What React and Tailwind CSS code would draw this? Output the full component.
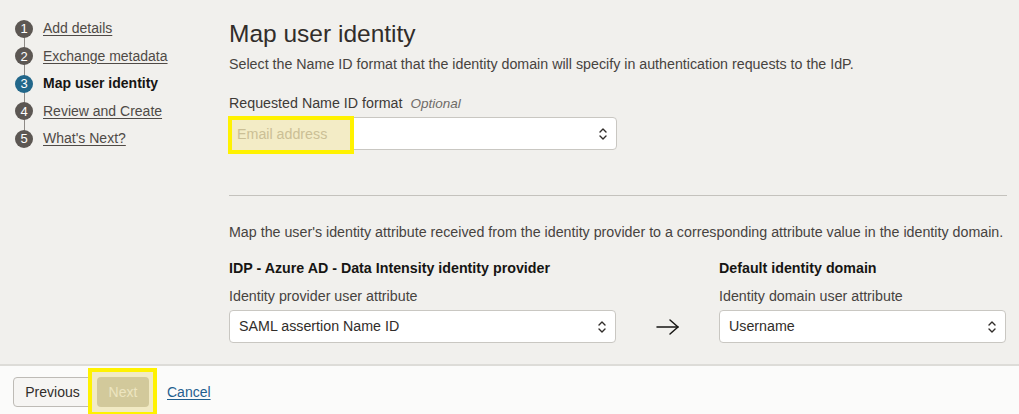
import React from 'react';

const steps = [
    { n: 1, label: 'Add details' },
    { n: 2, label: 'Exchange metadata' },
    { n: 3, label: 'Map user identity', active: true },
    { n: 4, label: 'Review and Create' },
    { n: 5, label: "What's Next?" },
];

function Chevrons() {
    return (
        <svg width="10" height="16" viewBox="0 0 10 16" fill="none" stroke="#312d2a" strokeWidth="1.4" strokeLinecap="round" strokeLinejoin="round">
            <path d="M2 6 L5 3 L8 6" />
            <path d="M2 10 L5 13 L8 10" />
        </svg>
    );
}

function SelectBox({ value, className = '' }) {
    return (
        <div className={`flex items-center justify-between h-[33px] bg-white border border-[#c9c7c2] rounded-[4px] pl-[9px] pr-[8px] ${className}`}>
            <span className="text-[14.25px] text-[#312d2a]">{value}</span>
            <Chevrons />
        </div>
    );
}

export default function App() {
    return (
        <div className="w-full h-[414px] flex flex-col bg-[#f1f0ed] overflow-hidden" style={{ fontFamily: '"Liberation Sans", Arial, sans-serif' }}>
            <div className="flex-1 flex min-h-0">
                {/* ── Steps ── */}
                <div className="w-[229px] shrink-0 pt-[15px] pl-[15px]">
                    <div className="relative">
                        <div className="absolute left-[8.5px] top-[14px] bottom-[14px] w-px bg-[#8e8a86]" />
                        {steps.map((s) => (
                            <div key={s.n} className="relative flex items-center h-[27.5px]">
                                <span className={`w-[18px] h-[18px] rounded-full flex items-center justify-center text-white text-[13px] leading-none ${s.active ? 'bg-[#22678a]' : 'bg-[#5c5753]'}`}>
                                    {s.n}
                                </span>
                                {s.active ? (
                                    <span className="ml-[10px] text-[14px] font-bold text-[#161513]">{s.label}</span>
                                ) : (
                                    <a className="ml-[10px] text-[14px] text-[#4f4a46] underline underline-offset-2">{s.label}</a>
                                )}
                            </div>
                        ))}
                    </div>
                </div>

                {/* ── Main ── */}
                <div className="flex-1 pr-[12px]">
                    <h1 className="pt-[20px] text-[24.5px] leading-[28px] text-[#312d2a]">Map user identity</h1>
                    <p className="mt-[6px] text-[14.25px] leading-[20px] text-[#47433f]">
                        Select the Name ID format that the identity domain will specify in authentication requests to the IdP.
                    </p>
                    <div className="mt-[19px] text-[14.25px] leading-[20px] text-[#3e3a37]">
                        Requested Name ID format <i className="ml-[4px] text-[13.5px] text-[#6f6b67]">Optional</i>
                    </div>
                    <div className="relative mt-[3px] w-[388px]">
                        <SelectBox value="" />
                        <div className="absolute -left-[1px] -top-[1px] w-[126px] h-[38px] border-4 border-[#fff200] bg-[#f3ecc6] flex items-center pl-[5px]">
                            <span className="text-[14.25px] text-[#cbbf95]">Email address</span>
                        </div>
                    </div>

                    <div className="mt-[45px] h-px bg-[#c4c2bd]" />

                    <p className="mt-[26px] text-[14.25px] leading-[20px] text-[#47433f]">
                        Map the user's identity attribute received from the identity provider to a corresponding attribute value in the identity domain.
                    </p>

                    <div className="mt-[16px] grid grid-cols-[387px_103px_287px]">
                        <div>
                            <div className="text-[14.25px] leading-[20px] font-bold text-[#161513]">IDP - Azure AD - Data Intensity identity provider</div>
                            <div className="mt-[8px] text-[14.25px] leading-[20px] text-[#47433f]">Identity provider user attribute</div>
                            <SelectBox value="SAML assertion Name ID" className="mt-[4px]" />
                        </div>
                        <div className="flex items-end justify-center pb-[6px]">
                            <svg width="26" height="20" viewBox="0 0 26 20" fill="none" stroke="#161513" strokeWidth="1.5" strokeLinecap="round" strokeLinejoin="round">
                                <path d="M2 10 H23" />
                                <path d="M15 3 L23 10 L15 17" />
                            </svg>
                        </div>
                        <div>
                            <div className="text-[14.25px] leading-[20px] font-bold text-[#161513]">Default identity domain</div>
                            <div className="mt-[8px] text-[14.25px] leading-[20px] text-[#47433f]">Identity domain user attribute</div>
                            <SelectBox value="Username" className="mt-[4px]" />
                        </div>
                    </div>
                </div>
            </div>

            {/* ── Footer ── */}
            <div className="h-[50px] shrink-0 border-t-2 border-[#dddcd8] bg-[#fbfbfa] flex items-center pl-[13px] pt-[4px]">
                <button className="h-[30px] w-[79px] border border-[#bebbb6] bg-[#f6f5f3] rounded-[4px] text-[14px] text-[#312d2a]">
                    Previous
                </button>
                <div className="relative ml-[5px]">
                    <span className="absolute -left-[9px] -right-[8px] -top-[9px] -bottom-[9px] border-4 border-[#fff200] bg-[#f1eac4]" />
                    <button className="relative h-[30px] w-[52px] rounded-[4px] bg-[#d2c99b] text-[14px] text-[#ede5c0]">
                        Next
                    </button>
                </div>
                <a className="ml-[18px] text-[14px] text-[#1f5f8f] underline underline-offset-2">Cancel</a>
            </div>
        </div>
    );
}
